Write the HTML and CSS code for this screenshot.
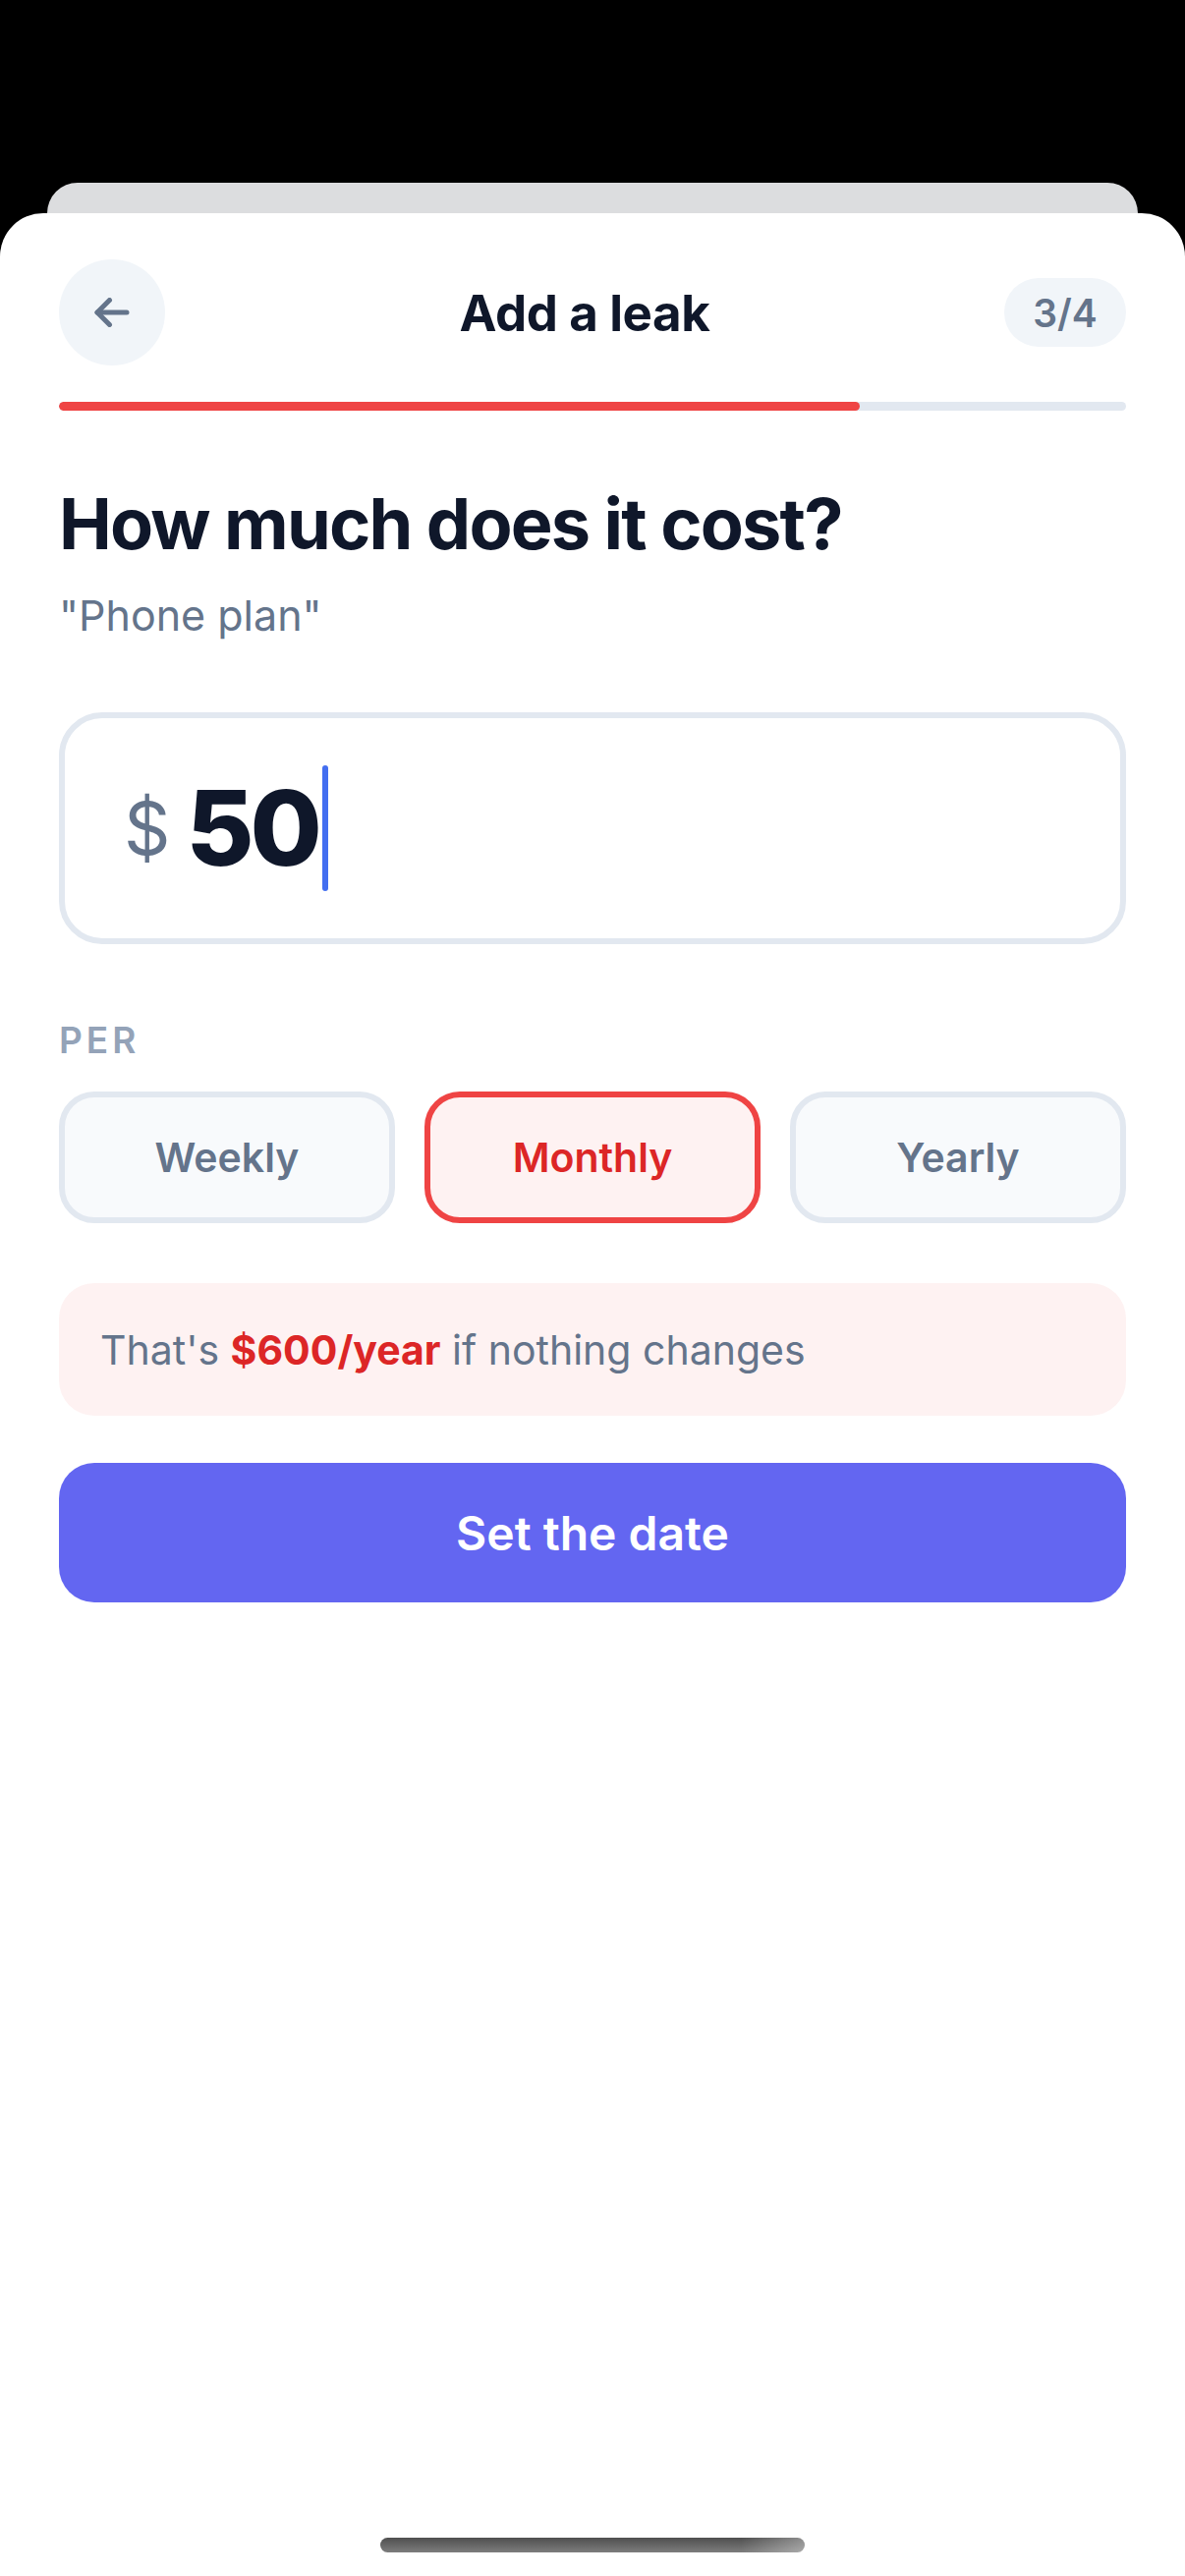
FILE: index.html
```html
<!DOCTYPE html>
<html lang="en">
<head>
<meta charset="utf-8">
<title>Add a leak</title>
<link rel="stylesheet" href="styles.css">
</head>
<body>
<div class="screen">
  <div class="behind-card"></div>
  <main class="sheet">
    <header class="top-bar">
      <button class="back-btn" type="button" aria-label="Back">
        <svg width="36" height="30" viewBox="0 0 36 30" fill="none" stroke="#64748b" stroke-width="5" stroke-linecap="round" stroke-linejoin="round">
          <path d="M33 15H3"/>
          <path d="M15.5 2.5L3 15l12.5 12.5"/>
        </svg>
      </button>
      <h1 class="top-title">Add a leak</h1>
      <span class="step-badge">3/4</span>
    </header>
    <div class="progress"><div class="progress-fill" style="width:75%"></div></div>

    <h2 class="question">How much does it cost?</h2>
    <p class="subject">"Phone plan"</p>

    <div class="amount-box">
      <span class="currency">$</span>
      <span class="amount">50</span>
      <span class="caret"></span>
    </div>

    <div class="per-label">PER</div>
    <div class="period-row">
      <button class="period" type="button">Weekly</button>
      <button class="period period-active" type="button">Monthly</button>
      <button class="period" type="button">Yearly</button>
    </div>

    <div class="callout">That's <strong class="callout-strong">$600/year</strong> if nothing changes</div>

    <button class="primary-btn" type="button">Set the date</button>

    <div class="home-indicator"></div>
  </main>
</div>
</body>
</html>
```

FILE: styles.css
```css
* {
  box-sizing: border-box;
}

html, body {
  margin: 0;
  padding: 0;
  background: #000000;
}

body {
  font-family: Inter, "Noto Sans", "Liberation Sans", sans-serif;
  color: #0f172a;
}

.screen {
  padding-top: 186px;
  display: flex;
  flex-direction: column;
  min-height: 2622px;
}

.behind-card {
  height: 31px;
  margin: 0 48px;
  background: #dcdddf;
  border-radius: 34px 34px 0 0;
}

.sheet {
  flex: 1;
  background: #ffffff;
  border-radius: 44px 44px 0 0;
  padding: 47px 60px 0;
  display: flex;
  flex-direction: column;
}

.top-bar {
  display: flex;
  align-items: center;
  height: 108px;
}

.back-btn {
  width: 108px;
  height: 108px;
  border-radius: 50%;
  border: none;
  background: #f1f5f9;
  padding: 0;
  display: flex;
  align-items: center;
  justify-content: center;
  flex: none;
}

.top-title {
  flex: 1;
  margin: 0;
  text-align: center;
  font-size: 51px;
  line-height: 1;
  font-weight: 700;
  color: #0f172a;
  letter-spacing: -0.4px;
}

.step-badge {
  flex: none;
  width: 124px;
  height: 70px;
  border-radius: 35px;
  background: #f1f5f9;
  color: #64748b;
  font-size: 39px;
  font-weight: 600;
  display: flex;
  align-items: center;
  justify-content: center;
}

.progress {
  margin-top: 37px;
  height: 9px;
  border-radius: 5px;
  background: #e2e8f0;
  overflow: hidden;
}

.progress-fill {
  height: 100%;
  background: #ef4444;
  border-radius: 5px;
}

.question {
  margin: 72px 0 0;
  font-size: 72px;
  line-height: 86px;
  font-weight: 700;
  color: #0f172a;
  letter-spacing: -1.8px;
}

.subject {
  margin: 22px 0 0;
  font-size: 43px;
  line-height: 56px;
  color: #64748b;
}

.amount-box {
  margin-top: 71px;
  height: 236px;
  border: 6px solid #e2e8f0;
  border-radius: 44px;
  padding: 0 60px;
  display: flex;
  align-items: center;
}

.currency {
  font-size: 74px;
  line-height: 1;
  color: #64748b;
  margin-right: 16px;
}

.amount {
  font-size: 106px;
  line-height: 1;
  font-weight: 800;
  color: #0f172a;
  letter-spacing: -4px;
}

.caret {
  width: 6px;
  height: 128px;
  border-radius: 3px;
  background: #436ef0;
  margin-left: 4px;
}

.per-label {
  margin-top: 76px;
  font-size: 37px;
  line-height: 44px;
  font-weight: 600;
  letter-spacing: 4px;
  color: #94a3b8;
}

.period-row {
  margin-top: 30px;
  display: grid;
  grid-template-columns: repeat(3, 1fr);
  gap: 30px;
}

.period {
  height: 134px;
  border: 6px solid #e2e8f0;
  border-radius: 36px;
  background: #f8fafc;
  font-family: inherit;
  font-size: 41px;
  font-weight: 600;
  color: #64748b;
  padding: 0;
}

.period-active {
  border-color: #ef4444;
  background: #fef2f2;
  color: #dc2626;
}

.callout {
  margin-top: 61px;
  height: 135px;
  border-radius: 36px;
  background: #fef2f2;
  padding: 0 42px;
  display: flex;
  align-items: center;
  font-size: 41px;
  color: #64748b;
  white-space: pre;
}

.callout-strong {
  font-weight: 700;
  color: #dc2626;
}

.primary-btn {
  margin-top: 48px;
  height: 142px;
  border: none;
  border-radius: 36px;
  background: #6366f1;
  color: #ffffff;
  font-family: inherit;
  font-size: 48px;
  font-weight: 600;
}

.home-indicator {
  margin: auto auto 24px;
  width: 432px;
  height: 15px;
  border-radius: 8px;
  background: linear-gradient(to right, rgba(255,255,255,0) 85%, rgba(255,255,255,0.35)), linear-gradient(to bottom, #4f4f4f, #7d7d7d);
}
```
